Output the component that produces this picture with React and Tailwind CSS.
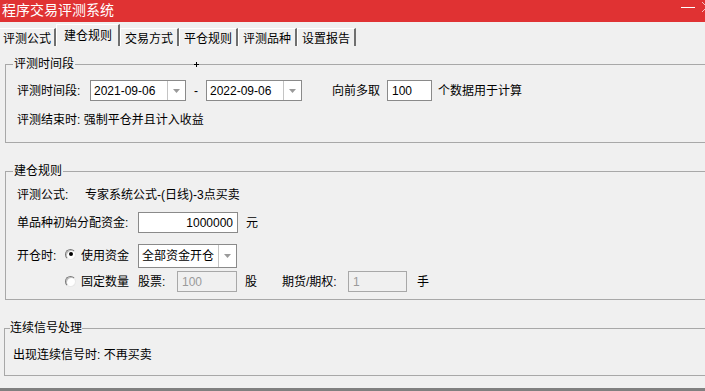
import React from "react";

const Arrow = () => (
  <svg width="7" height="4" viewBox="0 0 7 4">
    <path d="M0 0h7L3.5 4z" fill="#9a9a9a" />
  </svg>
);

function Radio({ checked }) {
  return (
    <span className="w-[11px] h-[11px] rounded-full border border-t-[#7a7a7a] border-l-[#7a7a7a] border-r-[#e8e8e8] border-b-[#e8e8e8] bg-white flex items-center justify-center shadow-[inset_1px_1px_0_#c0c0c0]">
      {checked && <span className="w-[4px] h-[4px] rounded-full bg-black" />}
    </span>
  );
}

function Tab({ label, selected, first }) {
  if (selected) {
    return (
      <div className="h-[22px] w-[64px] pl-[7px] pt-[2px] leading-[16px] border-t border-l border-white border-r-2 border-r-[#6f6f6f] bg-[#f0f0f0]">
        {label}
      </div>
    );
  }
  return (
    <div
      className={
        first
          ? "h-[18px] w-[56px] pl-[3px] leading-[18px] border-r-2 border-r-[#6f6f6f] border-t border-t-white"
          : "h-[18px] w-[59px] pl-[4px] leading-[18px] border-r-2 border-r-[#6f6f6f] border-t border-l border-white"
      }
    >
      {label}
    </div>
  );
}

export default function App() {
  return (
    <div className="relative w-[705px] h-[391px] overflow-hidden bg-[#f0f0f0] flex flex-col text-[12px] text-black font-['Liberation_Sans','Noto_Sans_CJK_SC',sans-serif]">
      {/* Title bar */}
      <div className="h-[22px] shrink-0 bg-[#e03233] flex items-start justify-between pl-[2px] text-white">
        <div className="text-[14px] leading-[18px] font-['Noto_Sans_CJK_SC',sans-serif]">程序交易评测系统</div>
        <div className="flex items-start mr-[-7px]">
          <div className="w-[14px] h-[1px] bg-white mt-[7px]" />
          <svg className="ml-[7px] mt-[2px]" width="10" height="10" viewBox="0 0 10 10">
            <path d="M0 0L10 10M10 0L0 10" stroke="#f4c0c0" strokeWidth="1" />
          </svg>
        </div>
      </div>

      {/* Tabs */}
      <div className="h-[24px] shrink-0 flex items-end font-['Noto_Sans_CJK_SC',sans-serif]">
        <Tab label="评测公式" first />
        <Tab label="建仓规则" selected />
        <Tab label="交易方式" />
        <Tab label="平仓规则" />
        <Tab label="评测品种" />
        <Tab label="设置报告" />
      </div>

      {/* Group 1 */}
      <fieldset className="ml-[5px] mr-[-6px] mt-[11px] border border-[#a8a8a8]">
        <legend className="ml-[7px] px-[1px] leading-[14px]">评测时间段</legend>
        <div className="pl-[11px] pt-[9px] pb-[14px]">
          <div className="flex items-center h-[21px]">
            <div className="w-[73px]">评测时间段:</div>
            <div className="flex w-[96px] h-[21px] border border-[#8a8a8a] bg-white">
              <div className="flex-1 pl-[3px] flex items-center">2021-09-06</div>
              <div className="w-[18px] border-l border-[#c4c4c4] flex items-center justify-center">
                <Arrow />
              </div>
            </div>
            <div className="w-[20px] text-center">-</div>
            <div className="flex w-[96px] h-[21px] border border-[#8a8a8a] bg-white">
              <div className="flex-1 pl-[3px] flex items-center">2022-09-06</div>
              <div className="w-[18px] border-l border-[#c4c4c4] flex items-center justify-center">
                <Arrow />
              </div>
            </div>
            <div className="ml-[30px] w-[55px]">向前多取</div>
            <div className="w-[45px] h-[21px] border border-[#8a8a8a] bg-white pl-[4px] flex items-center">100</div>
            <div className="ml-[6px]">个数据用于计算</div>
          </div>
          <div className="mt-[11px] h-[16px] flex items-center">评测结束时: 强制平仓并且计入收益</div>
        </div>
      </fieldset>

      {/* Group 2 */}
      <fieldset className="ml-[5px] mr-[-6px] mt-[21px] border border-[#a8a8a8]">
        <legend className="ml-[7px] px-[1px] leading-[14px]">建仓规则</legend>
        <div className="pl-[11px] pt-[8px] pb-[7px]">
          <div className="flex items-center h-[18px]">
            <div className="w-[68px]">评测公式:</div>
            <div>专家系统公式-(日线)-3点买卖</div>
          </div>
          <div className="flex items-center h-[21px] mt-[8px]">
            <div className="w-[121px]">单品种初始分配资金:</div>
            <div className="w-[100px] h-[21px] border border-[#8a8a8a] bg-white pr-[4px] flex items-center justify-end">1000000</div>
            <div className="ml-[8px]">元</div>
          </div>
          <div className="flex items-center h-[24px] mt-[11px]">
            <div className="w-[48px]">开仓时:</div>
            <div className="w-[73px] flex items-center">
              <span className="mb-[4px]">
                <Radio checked />
              </span>
              <span className="ml-[5px]">使用资金</span>
            </div>
            <div className="flex w-[99px] h-[24px] border border-[#8a8a8a] bg-white">
              <div className="flex-1 pl-[3px] flex items-center overflow-hidden whitespace-nowrap">全部资金开仓</div>
              <div className="w-[18px] border-l border-[#c4c4c4] flex items-center justify-center">
                <Arrow />
              </div>
            </div>
          </div>
          <div className="flex items-center h-[21px] mt-[3px]">
            <div className="w-[48px]" />
            <div className="w-[73px] flex items-center">
              <Radio />
              <span className="ml-[5px]">固定数量</span>
            </div>
            <div className="w-[39px]">股票:</div>
            <div className="w-[60px] h-[21px] border border-[#a8a8a8] pl-[4px] flex items-center text-[#9a9a9a]">100</div>
            <div className="ml-[8px]">股</div>
            <div className="ml-[25px] w-[66px]">期货/期权:</div>
            <div className="w-[59px] h-[21px] border border-[#a8a8a8] pl-[4px] flex items-center text-[#9a9a9a]">1</div>
            <div className="ml-[10px]">手</div>
          </div>
        </div>
      </fieldset>

      {/* Group 3 */}
      <fieldset className="ml-[4px] mr-[-6px] mt-[21px] border border-[#a8a8a8]">
        <legend className="ml-[5px] leading-[14px]">连续信号处理</legend>
        <div className="pl-[8px] pt-[12px] pb-[12px]">
          <div className="h-[16px] flex items-center">出现连续信号时: 不再买卖</div>
        </div>
      </fieldset>

      <div className="flex-1" />
      <div className="h-[3px] shrink-0 bg-[#808080]" />

      {/* cursor artifact */}
      <div className="absolute left-[194px] top-[62px] w-[5px] h-[5px]">
        <div className="absolute left-[2px] top-0 w-[1px] h-[5px] bg-black" />
        <div className="absolute left-0 top-[2px] w-[5px] h-[1px] bg-black" />
      </div>
    </div>
  );
}
